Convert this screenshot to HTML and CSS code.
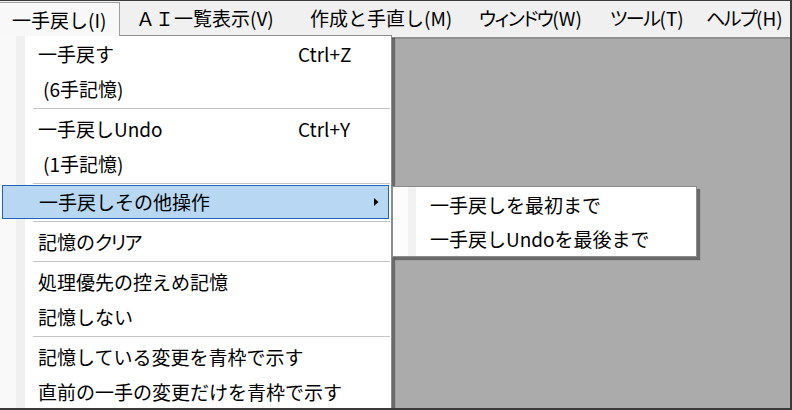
FILE: index.html
```html
<!DOCTYPE html>
<html lang="ja">
<head>
<meta charset="utf-8">
<title>メニュー</title>
<link rel="stylesheet" href="styles.css">
</head>
<body>
<div class="window">
  <div class="menubar">
    <div class="mb-item mb-active">一手戻し(I)</div>
    <div class="mb-item mb-2">ＡＩ一覧表示(V)</div>
    <div class="mb-item mb-3">作成と手直し(M)</div>
    <div class="mb-item mb-4"><span class="kana">ウィンドウ</span>(W)</div>
    <div class="mb-item mb-5"><span class="kana">ツール</span>(T)</div>
    <div class="mb-item mb-6"><span class="kana">ヘルプ</span>(H)</div>
  </div>
  <div class="client">
    <div class="menu main-menu">
      <div class="mi"><span class="lbl">一手戻す</span><span class="key">Ctrl+Z</span></div>
      <div class="mi"><span class="lbl sub-note">(6手記憶)</span></div>
      <div class="sep"></div>
      <div class="mi"><span class="lbl">一手戻しUndo</span><span class="key">Ctrl+Y</span></div>
      <div class="mi"><span class="lbl sub-note">(1手記憶)</span></div>
      <div class="sep"></div>
      <div class="mi mi-hot"><span class="lbl">一手戻しその他操作</span>
        <svg class="arrow" width="5" height="8" viewBox="0 0 5 8"><path d="M0 0 L4.5 4 L0 8 Z" fill="#000"/></svg>
      </div>
      <div class="sep"></div>
      <div class="mi"><span class="lbl">記憶の<span class="kana">クリア</span></span></div>
      <div class="sep"></div>
      <div class="mi"><span class="lbl">処理優先の控えめ記憶</span></div>
      <div class="mi"><span class="lbl">記憶しない</span></div>
      <div class="sep"></div>
      <div class="mi"><span class="lbl">記憶している変更を青枠で示す</span></div>
      <div class="mi"><span class="lbl">直前の一手の変更だけを青枠で示す</span></div>
    </div>
    <div class="menu sub-menu">
      <div class="mi mi-sub"><span class="lbl">一手戻しを最初まで</span></div>
      <div class="mi mi-sub"><span class="lbl">一手戻しUndoを最後まで</span></div>
    </div>
  </div>
</div>
</body>
</html>
```

FILE: styles.css
```css
html, body {
  margin: 0;
  padding: 0;
  background: #ababab;
}

body {
  font-family: "Noto Sans CJK JP", "Noto Sans", sans-serif;
  font-size: 19px;
  color: #000;
}

.kana {
  font-feature-settings: "palt";
  letter-spacing: -1.5px;
}

.window {
  width: 792px;
  height: 410px;
  box-sizing: border-box;
  border-top: 1px solid #3a3a3a;
  border-right: 2px solid #3a3a3a;
  border-bottom: 2px solid #3a3a3a;
  display: flex;
  flex-direction: column;
  overflow: hidden;
}

.menubar {
  height: 36px;
  background: #f0f0f0;
  display: flex;
  flex: none;
}

.mb-item {
  box-sizing: border-box;
  height: 36px;
  padding-left: 14px;
  display: flex;
  align-items: center;
  padding-bottom: 3px;
  white-space: nowrap;
}

.mb-active {
  width: 120px;
  height: 34px;
  margin-top: 1px;
  padding-left: 12px;
  padding-bottom: 1px;
  background: #f8f8f8;
  border-top: 1px solid #a0a0a0;
  border-right: 1px solid #a0a0a0;
  position: relative;
  z-index: 3;
}

.mb-2 { width: 176px; padding-left: 16px; }
.mb-3 { width: 169px; }
.mb-4 { width: 131px; }
.mb-5 { width: 96px; }
.mb-6 { width: 98px; }

.client {
  flex: 1;
  position: relative;
  background: #ababab;
  border-top: 2px solid #909090;
}

.menu {
  position: absolute;
  box-sizing: border-box;
  border: 1px solid #8c8c8c;
  box-shadow: 3px 3px 1px rgba(0, 0, 0, 0.38);
}

.main-menu {
  left: 0;
  top: -4px;
  width: 392px;
  height: 390px;
  border-left: none;
  background: linear-gradient(to right, #f9f9f9 0, #f9f9f9 16px, #f0f0f0 16px, #f0f0f0 25px, #ffffff 25px);
  z-index: 2;
}

.main-menu::before {
  content: "";
  position: absolute;
  left: 0;
  top: -1px;
  width: 119px;
  height: 1px;
  background: #f8f8f8;
}

.sub-menu {
  left: 392px;
  top: 147px;
  width: 305px;
  height: 71px;
  background: linear-gradient(to right, #fcfcfc 0, #fcfcfc 15px, #f2f2f2 15px, #f2f2f2 23px, #ffffff 23px);
  z-index: 4;
}

.mi {
  height: 35px;
  box-sizing: border-box;
  display: flex;
  align-items: center;
  padding-left: 38px;
  white-space: nowrap;
  position: relative;
}

.lbl {
  width: 260px;
}

.sub-note {
  padding-left: 5px;
  box-sizing: border-box;
}

.key {
  flex: none;
}

.mi-hot {
  height: 34px;
  margin: -1px 2px 0 2px;
  padding-left: 36px;
  padding-right: 9px;
  background: #b7d7f3;
  border: 1px solid #1f63bb;
  padding-bottom: 1px;
}

.mi-hot .lbl {
  flex: 1;
}

.arrow {
  flex: none;
}

.mi-sub {
  height: 34px;
  padding-left: 37px;
}

.mi-sub .lbl {
  width: auto;
}

.sep {
  height: 5px;
  box-sizing: border-box;
  padding-top: 2px;
  margin-left: 33px;
  margin-right: 1px;
}

.sep::after {
  content: "";
  display: block;
  height: 1px;
  background: #c4c4c4;
}
```
